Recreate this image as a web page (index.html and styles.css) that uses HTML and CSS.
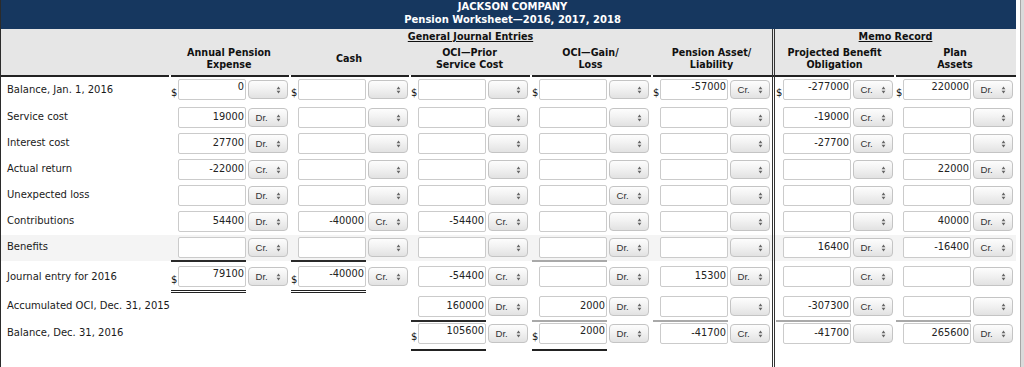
FILE: index.html
```html
<!DOCTYPE html>
<html lang="en">
<head>
<meta charset="utf-8">
<title>Jackson Company Pension Worksheet</title>
<link rel="stylesheet" href="styles.css">
</head>
<body>
<svg class="defs" aria-hidden="true"><symbol id="ud" viewBox="0 0 5 8"><path d="M0.6 3.3 2.5 0.6 4.4 3.3Z M0.6 4.7 2.5 7.4 4.4 4.7Z"/></symbol></svg>
<div class="page">
<div class="sheet">
  <div class="banner">JACKSON COMPANY<br>Pension Worksheet—2016, 2017, 2018</div>
  <div class="head">
    <div class="grid group">
      <div></div>
      <div class="group-title">General Journal Entries</div>
      <div class="memo-title">Memo Record</div>
    </div>
    <div class="grid cols">
      <div class="col"></div>
      <div class="col">Annual Pension<br>Expense</div>
      <div class="col">Cash</div>
      <div class="col">OCI—Prior<br>Service Cost</div>
      <div class="col">OCI—Gain/<br>Loss</div>
      <div class="col">Pension Asset/<br>Liability</div>
      <div class="col memo">Projected Benefit<br>Obligation</div>
      <div class="col">Plan<br>Assets</div>
    </div>
  </div>
  <div class="grid rule"><div></div><div></div><div></div><div></div><div></div><div></div><div class="memo"></div><div></div></div>

  <div class="body">
    <div class="r r-first">
      <div class="lbl">Balance, Jan. 1, 2016</div>
      <div class="c hi"><div class="amt"><span class="cur">$</span><span class="inp">0</span></div><span class="sel"><span></span><svg class="ar"><use href="#ud"/></svg></span></div>
      <div class="c hi"><div class="amt"><span class="cur">$</span><span class="inp"></span></div><span class="sel"><span></span><svg class="ar"><use href="#ud"/></svg></span></div>
      <div class="c hi"><div class="amt"><span class="cur">$</span><span class="inp"></span></div><span class="sel"><span></span><svg class="ar"><use href="#ud"/></svg></span></div>
      <div class="c hi"><div class="amt"><span class="cur">$</span><span class="inp"></span></div><span class="sel"><span></span><svg class="ar"><use href="#ud"/></svg></span></div>
      <div class="c hi"><div class="amt"><span class="cur">$</span><span class="inp">-57000</span></div><span class="sel"><span>Cr.</span><svg class="ar"><use href="#ud"/></svg></span></div>
      <div class="c hi memo"><div class="amt"><span class="cur">$</span><span class="inp">-277000</span></div><span class="sel"><span>Cr.</span><svg class="ar"><use href="#ud"/></svg></span></div>
      <div class="c hi"><div class="amt"><span class="cur">$</span><span class="inp">220000</span></div><span class="sel"><span>Dr.</span><svg class="ar"><use href="#ud"/></svg></span></div>
    </div>

    <div class="r">
      <div class="lbl">Service cost</div>
      <div class="c"><div class="amt"><span class="cur"></span><span class="inp">19000</span></div><span class="sel"><span>Dr.</span><svg class="ar"><use href="#ud"/></svg></span></div>
      <div class="c"><div class="amt"><span class="cur"></span><span class="inp"></span></div><span class="sel"><span></span><svg class="ar"><use href="#ud"/></svg></span></div>
      <div class="c"><div class="amt"><span class="cur"></span><span class="inp"></span></div><span class="sel"><span></span><svg class="ar"><use href="#ud"/></svg></span></div>
      <div class="c"><div class="amt"><span class="cur"></span><span class="inp"></span></div><span class="sel"><span></span><svg class="ar"><use href="#ud"/></svg></span></div>
      <div class="c"><div class="amt"><span class="cur"></span><span class="inp"></span></div><span class="sel"><span></span><svg class="ar"><use href="#ud"/></svg></span></div>
      <div class="c memo"><div class="amt"><span class="cur"></span><span class="inp">-19000</span></div><span class="sel"><span>Cr.</span><svg class="ar"><use href="#ud"/></svg></span></div>
      <div class="c"><div class="amt"><span class="cur"></span><span class="inp"></span></div><span class="sel"><span></span><svg class="ar"><use href="#ud"/></svg></span></div>
    </div>

    <div class="r">
      <div class="lbl">Interest cost</div>
      <div class="c"><div class="amt"><span class="cur"></span><span class="inp">27700</span></div><span class="sel"><span>Dr.</span><svg class="ar"><use href="#ud"/></svg></span></div>
      <div class="c"><div class="amt"><span class="cur"></span><span class="inp"></span></div><span class="sel"><span></span><svg class="ar"><use href="#ud"/></svg></span></div>
      <div class="c"><div class="amt"><span class="cur"></span><span class="inp"></span></div><span class="sel"><span></span><svg class="ar"><use href="#ud"/></svg></span></div>
      <div class="c"><div class="amt"><span class="cur"></span><span class="inp"></span></div><span class="sel"><span></span><svg class="ar"><use href="#ud"/></svg></span></div>
      <div class="c"><div class="amt"><span class="cur"></span><span class="inp"></span></div><span class="sel"><span></span><svg class="ar"><use href="#ud"/></svg></span></div>
      <div class="c memo"><div class="amt"><span class="cur"></span><span class="inp">-27700</span></div><span class="sel"><span>Cr.</span><svg class="ar"><use href="#ud"/></svg></span></div>
      <div class="c"><div class="amt"><span class="cur"></span><span class="inp"></span></div><span class="sel"><span></span><svg class="ar"><use href="#ud"/></svg></span></div>
    </div>

    <div class="r">
      <div class="lbl">Actual return</div>
      <div class="c"><div class="amt"><span class="cur"></span><span class="inp">-22000</span></div><span class="sel"><span>Cr.</span><svg class="ar"><use href="#ud"/></svg></span></div>
      <div class="c"><div class="amt"><span class="cur"></span><span class="inp"></span></div><span class="sel"><span></span><svg class="ar"><use href="#ud"/></svg></span></div>
      <div class="c"><div class="amt"><span class="cur"></span><span class="inp"></span></div><span class="sel"><span></span><svg class="ar"><use href="#ud"/></svg></span></div>
      <div class="c"><div class="amt"><span class="cur"></span><span class="inp"></span></div><span class="sel"><span></span><svg class="ar"><use href="#ud"/></svg></span></div>
      <div class="c"><div class="amt"><span class="cur"></span><span class="inp"></span></div><span class="sel"><span></span><svg class="ar"><use href="#ud"/></svg></span></div>
      <div class="c memo"><div class="amt"><span class="cur"></span><span class="inp"></span></div><span class="sel"><span></span><svg class="ar"><use href="#ud"/></svg></span></div>
      <div class="c"><div class="amt"><span class="cur"></span><span class="inp">22000</span></div><span class="sel"><span>Dr.</span><svg class="ar"><use href="#ud"/></svg></span></div>
    </div>

    <div class="r">
      <div class="lbl">Unexpected loss</div>
      <div class="c"><div class="amt"><span class="cur"></span><span class="inp"></span></div><span class="sel"><span>Dr.</span><svg class="ar"><use href="#ud"/></svg></span></div>
      <div class="c"><div class="amt"><span class="cur"></span><span class="inp"></span></div><span class="sel"><span></span><svg class="ar"><use href="#ud"/></svg></span></div>
      <div class="c"><div class="amt"><span class="cur"></span><span class="inp"></span></div><span class="sel"><span></span><svg class="ar"><use href="#ud"/></svg></span></div>
      <div class="c"><div class="amt"><span class="cur"></span><span class="inp"></span></div><span class="sel"><span>Cr.</span><svg class="ar"><use href="#ud"/></svg></span></div>
      <div class="c"><div class="amt"><span class="cur"></span><span class="inp"></span></div><span class="sel"><span></span><svg class="ar"><use href="#ud"/></svg></span></div>
      <div class="c memo"><div class="amt"><span class="cur"></span><span class="inp"></span></div><span class="sel"><span></span><svg class="ar"><use href="#ud"/></svg></span></div>
      <div class="c"><div class="amt"><span class="cur"></span><span class="inp"></span></div><span class="sel"><span></span><svg class="ar"><use href="#ud"/></svg></span></div>
    </div>

    <div class="r">
      <div class="lbl">Contributions</div>
      <div class="c"><div class="amt"><span class="cur"></span><span class="inp">54400</span></div><span class="sel"><span>Dr.</span><svg class="ar"><use href="#ud"/></svg></span></div>
      <div class="c"><div class="amt"><span class="cur"></span><span class="inp">-40000</span></div><span class="sel"><span>Cr.</span><svg class="ar"><use href="#ud"/></svg></span></div>
      <div class="c"><div class="amt"><span class="cur"></span><span class="inp">-54400</span></div><span class="sel"><span>Cr.</span><svg class="ar"><use href="#ud"/></svg></span></div>
      <div class="c"><div class="amt"><span class="cur"></span><span class="inp"></span></div><span class="sel"><span></span><svg class="ar"><use href="#ud"/></svg></span></div>
      <div class="c"><div class="amt"><span class="cur"></span><span class="inp"></span></div><span class="sel"><span></span><svg class="ar"><use href="#ud"/></svg></span></div>
      <div class="c memo"><div class="amt"><span class="cur"></span><span class="inp"></span></div><span class="sel"><span></span><svg class="ar"><use href="#ud"/></svg></span></div>
      <div class="c"><div class="amt"><span class="cur"></span><span class="inp">40000</span></div><span class="sel"><span>Dr.</span><svg class="ar"><use href="#ud"/></svg></span></div>
    </div>

    <div class="r r-shade">
      <div class="lbl">Benefits</div>
      <div class="c"><div class="amt u-dark"><span class="cur"></span><span class="inp"></span></div><span class="sel"><span>Cr.</span><svg class="ar"><use href="#ud"/></svg></span></div>
      <div class="c"><div class="amt u-dark"><span class="cur"></span><span class="inp"></span></div><span class="sel"><span></span><svg class="ar"><use href="#ud"/></svg></span></div>
      <div class="c"><div class="amt"><span class="cur"></span><span class="inp"></span></div><span class="sel"><span></span><svg class="ar"><use href="#ud"/></svg></span></div>
      <div class="c"><div class="amt u-gray"><span class="cur"></span><span class="inp"></span></div><span class="sel"><span>Dr.</span><svg class="ar"><use href="#ud"/></svg></span></div>
      <div class="c"><div class="amt"><span class="cur"></span><span class="inp"></span></div><span class="sel"><span></span><svg class="ar"><use href="#ud"/></svg></span></div>
      <div class="c memo"><div class="amt"><span class="cur"></span><span class="inp">16400</span></div><span class="sel"><span>Dr.</span><svg class="ar"><use href="#ud"/></svg></span></div>
      <div class="c"><div class="amt"><span class="cur"></span><span class="inp">-16400</span></div><span class="sel"><span>Cr.</span><svg class="ar"><use href="#ud"/></svg></span></div>
    </div>

    <div class="r r-journal">
      <div class="lbl">Journal entry for 2016</div>
      <div class="c hi"><div class="amt u-double"><span class="cur">$</span><span class="inp">79100</span></div><span class="sel"><span>Dr.</span><svg class="ar"><use href="#ud"/></svg></span></div>
      <div class="c hi"><div class="amt u-double"><span class="cur">$</span><span class="inp">-40000</span></div><span class="sel"><span>Cr.</span><svg class="ar"><use href="#ud"/></svg></span></div>
      <div class="c"><div class="amt"><span class="cur"></span><span class="inp">-54400</span></div><span class="sel"><span>Cr.</span><svg class="ar"><use href="#ud"/></svg></span></div>
      <div class="c"><div class="amt"><span class="cur"></span><span class="inp"></span></div><span class="sel"><span>Dr.</span><svg class="ar"><use href="#ud"/></svg></span></div>
      <div class="c"><div class="amt"><span class="cur"></span><span class="inp">15300</span></div><span class="sel"><span>Dr.</span><svg class="ar"><use href="#ud"/></svg></span></div>
      <div class="c memo"><div class="amt"><span class="cur"></span><span class="inp"></span></div><span class="sel"><span>Cr.</span><svg class="ar"><use href="#ud"/></svg></span></div>
      <div class="c"><div class="amt"><span class="cur"></span><span class="inp"></span></div><span class="sel"><span></span><svg class="ar"><use href="#ud"/></svg></span></div>
    </div>

    <div class="r r-accum">
      <div class="lbl">Accumulated OCI, Dec. 31, 2015</div>
      <div class="c"></div>
      <div class="c"></div>
      <div class="c"><div class="amt u-dark"><span class="cur"></span><span class="inp">160000</span></div><span class="sel"><span>Dr.</span><svg class="ar"><use href="#ud"/></svg></span></div>
      <div class="c"><div class="amt u-gray"><span class="cur"></span><span class="inp">2000</span></div><span class="sel"><span>Dr.</span><svg class="ar"><use href="#ud"/></svg></span></div>
      <div class="c"><div class="amt u-gray"><span class="cur"></span><span class="inp"></span></div><span class="sel"><span></span><svg class="ar"><use href="#ud"/></svg></span></div>
      <div class="c memo"><div class="amt u-gray"><span class="cur"></span><span class="inp">-307300</span></div><span class="sel"><span>Cr.</span><svg class="ar"><use href="#ud"/></svg></span></div>
      <div class="c"><div class="amt u-gray"><span class="cur"></span><span class="inp"></span></div><span class="sel"><span></span><svg class="ar"><use href="#ud"/></svg></span></div>
    </div>

    <div class="r r-total">
      <div class="lbl">Balance, Dec. 31, 2016</div>
      <div class="c"></div>
      <div class="c"></div>
      <div class="c hi"><div class="amt u-total"><span class="cur">$</span><span class="inp">105600</span></div><span class="sel"><span>Dr.</span><svg class="ar"><use href="#ud"/></svg></span></div>
      <div class="c hi"><div class="amt u-total"><span class="cur">$</span><span class="inp">2000</span></div><span class="sel"><span>Dr.</span><svg class="ar"><use href="#ud"/></svg></span></div>
      <div class="c"><div class="amt"><span class="cur"></span><span class="inp">-41700</span></div><span class="sel"><span>Cr.</span><svg class="ar"><use href="#ud"/></svg></span></div>
      <div class="c memo"><div class="amt"><span class="cur"></span><span class="inp">-41700</span></div><span class="sel"><span></span><svg class="ar"><use href="#ud"/></svg></span></div>
      <div class="c"><div class="amt"><span class="cur"></span><span class="inp">265600</span></div><span class="sel"><span>Dr.</span><svg class="ar"><use href="#ud"/></svg></span></div>
    </div>
  </div>
  <div class="r fill"><div></div><div></div><div></div><div></div><div></div><div></div><div class="memo"></div><div></div></div>
</div>
</div>
</body>
</html>
```

FILE: styles.css
```css
* { box-sizing: border-box; }
html, body { margin: 0; height: 100%; }
body {
  background: #dadada;
  font-family: "DejaVu Sans", Verdana, sans-serif;
  color: #1a1a1a;
  overflow: hidden;
}
.defs { display: block; width: 0; height: 0; overflow: hidden; }

.page {
  width: 1021px;
  min-height: 100%;
  background: #fff;
  border-right: 1px solid #a6a6a6;
}
.sheet {
  width: 1016px;
  min-height: 367px;
  border-left: 1px solid #2b2b2b;
  display: flex;
  flex-direction: column;
}

.banner {
  height: 29px;
  background: #16375f;
  color: #fff;
  font-weight: bold;
  font-size: 10px;
  line-height: 13px;
  text-align: center;
  padding-left: 8px;
}

.head {
  background: #e6e6e6;
  font-weight: bold;
  font-size: 9.6px;
  line-height: 12px;
  color: #111;
}
.grid {
  display: grid;
  grid-template-columns: 168px 120px 120px 121px 121px 121px 122px 122px;
}
.group { height: 14px; padding-top: 2px; }
.group-title { grid-column: 2 / 7; text-align: center; text-decoration: underline; }
.memo-title { grid-column: 7 / 9; text-align: center; text-decoration: underline; border-left: 3px double #333; margin-top: -2px; padding-top: 2px; }
.cols { height: 32px; }
.col { display: flex; align-items: center; justify-content: center; text-align: center; }
.memo { border-left: 3px double #333; }

.rule { height: 2px; background: #fff; }
.rule > div { background: #222; }
.rule > div + div { border-left: 2px solid #fff; }
.rule > .memo { border-left: 3px double #333; }

.body { font-size: 10px; }
.r {
  display: grid;
  grid-template-columns: 168px 120px 120px 121px 121px 121px 122px 118px;
  height: 26px;
}
.r-first { height: 28px; }
.r-shade { background: #f4f4f4; }
.r-journal { height: 33px; }
.r-accum { height: 28px; }
.r-total { height: 32px; }
.fill { flex: 1; height: auto; }

.lbl {
  padding: 6px 0 0 6px;
  line-height: 12px;
  white-space: nowrap;
  color: #1a1a1a;
}
.r-first .lbl { padding-top: 7px; }
.r-journal .lbl { padding-top: 10px; }
.r-accum .lbl { padding-top: 5.5px; }
.r-total .lbl { padding-top: 4.5px; }

.c { display: flex; align-items: flex-start; padding-top: 2px; }
.r-journal .c { padding-top: 5px; }
.r-total .c { padding-top: 1px; }

.amt { display: flex; margin-left: 2px; }
.memo .amt { margin-left: 1px; }
.cur {
  width: 7px;
  align-self: flex-end;
  line-height: 12px;
  margin-bottom: 1.5px;
  font-size: 10px;
  color: #111;
}
.inp {
  width: 68px;
  height: 21px;
  border: 1px solid #cbcbcb;
  border-radius: 2px;
  background: #fff;
  font-size: 9.8px;
  line-height: 12px;
  padding: 3px 1px 0 0;
  text-align: right;
  color: #222;
  white-space: nowrap;
}
.hi .inp { padding-top: 1px; }

.u-dark { border-bottom: 2px solid #2a2a2a; padding-bottom: 2px; }
.u-gray { border-bottom: 2px solid #a9a9a9; padding-bottom: 2px; }
.u-double { border-bottom: 3px double #222; padding-bottom: 3px; }
.u-total { border-bottom: 2px solid #222; padding-bottom: 5px; }
.r-accum .u-dark, .r-accum .u-gray { padding-bottom: 3px; }

.sel {
  width: 40px;
  height: 19px;
  margin: 1px 0 0 2px;
  border: 1px solid #c4c4c4;
  border-radius: 4px;
  background: linear-gradient(#fdfdfd, #f2f2f2 45%, #e2e2e2);
  display: flex;
  align-items: center;
  justify-content: space-between;
  padding: 0 6px 0 6.5px;
  font-family: "Liberation Sans", Arial, sans-serif;
  font-size: 9.6px;
  color: #333;
  flex-shrink: 0;
}
.ar { width: 5px; height: 8px; fill: #666; }
```
